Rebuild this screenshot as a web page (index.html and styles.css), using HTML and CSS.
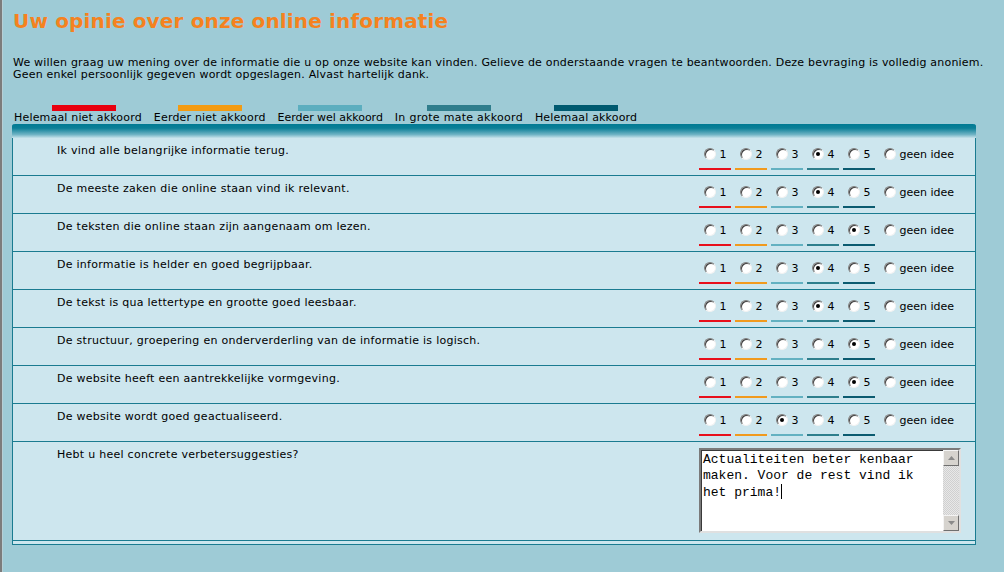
FILE: index.html
```html
<!DOCTYPE html>
<html lang="nl">
<head>
<meta charset="utf-8">
<title>Uw opinie over onze online informatie</title>
<link rel="stylesheet" href="styles.css">
</head>
<body>
<div class="page">
  <h1 class="title">Uw opinie over onze online informatie</h1>
  <p class="intro">We willen graag uw mening over de informatie die u op onze website kan vinden. Gelieve de onderstaande vragen te beantwoorden. Deze bevraging is volledig anoniem.<br>Geen enkel persoonlijk gegeven wordt opgeslagen. Alvast hartelijk dank.</p>

  <div class="legend">
    <div class="leg leg1"><span class="bar c1"></span><span class="lbl">Helemaal niet akkoord</span></div>
    <div class="leg leg2"><span class="bar c2"></span><span class="lbl">Eerder niet akkoord</span></div>
    <div class="leg leg3"><span class="bar c3"></span><span class="lbl">Eerder wel akkoord</span></div>
    <div class="leg leg4"><span class="bar c4"></span><span class="lbl">In grote mate akkoord</span></div>
    <div class="leg leg5"><span class="bar c5"></span><span class="lbl">Helemaal akkoord</span></div>
  </div>

  <div class="survey">
    <div class="survey-head"></div>
    <div class="rows">
      <div class="row">
        <div class="q">Ik vind alle belangrijke informatie terug.</div>
        <div class="opts">
          <span class="opt c1"><span class="radio"></span>1</span>
          <span class="opt c2"><span class="radio"></span>2</span>
          <span class="opt c3"><span class="radio"></span>3</span>
          <span class="opt c4"><span class="radio on"></span>4</span>
          <span class="opt c5"><span class="radio"></span>5</span>
          <span class="opt none"><span class="radio"></span>geen idee</span>
        </div>
      </div>
      <div class="row">
        <div class="q">De meeste zaken die online staan vind ik relevant.</div>
        <div class="opts">
          <span class="opt c1"><span class="radio"></span>1</span>
          <span class="opt c2"><span class="radio"></span>2</span>
          <span class="opt c3"><span class="radio"></span>3</span>
          <span class="opt c4"><span class="radio on"></span>4</span>
          <span class="opt c5"><span class="radio"></span>5</span>
          <span class="opt none"><span class="radio"></span>geen idee</span>
        </div>
      </div>
      <div class="row">
        <div class="q">De teksten die online staan zijn aangenaam om lezen.</div>
        <div class="opts">
          <span class="opt c1"><span class="radio"></span>1</span>
          <span class="opt c2"><span class="radio"></span>2</span>
          <span class="opt c3"><span class="radio"></span>3</span>
          <span class="opt c4"><span class="radio"></span>4</span>
          <span class="opt c5"><span class="radio on"></span>5</span>
          <span class="opt none"><span class="radio"></span>geen idee</span>
        </div>
      </div>
      <div class="row">
        <div class="q">De informatie is helder en goed begrijpbaar.</div>
        <div class="opts">
          <span class="opt c1"><span class="radio"></span>1</span>
          <span class="opt c2"><span class="radio"></span>2</span>
          <span class="opt c3"><span class="radio"></span>3</span>
          <span class="opt c4"><span class="radio on"></span>4</span>
          <span class="opt c5"><span class="radio"></span>5</span>
          <span class="opt none"><span class="radio"></span>geen idee</span>
        </div>
      </div>
      <div class="row">
        <div class="q">De tekst is qua lettertype en grootte goed leesbaar.</div>
        <div class="opts">
          <span class="opt c1"><span class="radio"></span>1</span>
          <span class="opt c2"><span class="radio"></span>2</span>
          <span class="opt c3"><span class="radio"></span>3</span>
          <span class="opt c4"><span class="radio on"></span>4</span>
          <span class="opt c5"><span class="radio"></span>5</span>
          <span class="opt none"><span class="radio"></span>geen idee</span>
        </div>
      </div>
      <div class="row">
        <div class="q">De structuur, groepering en onderverderling van de informatie is logisch.</div>
        <div class="opts">
          <span class="opt c1"><span class="radio"></span>1</span>
          <span class="opt c2"><span class="radio"></span>2</span>
          <span class="opt c3"><span class="radio"></span>3</span>
          <span class="opt c4"><span class="radio"></span>4</span>
          <span class="opt c5"><span class="radio on"></span>5</span>
          <span class="opt none"><span class="radio"></span>geen idee</span>
        </div>
      </div>
      <div class="row">
        <div class="q">De website heeft een aantrekkelijke vormgeving.</div>
        <div class="opts">
          <span class="opt c1"><span class="radio"></span>1</span>
          <span class="opt c2"><span class="radio"></span>2</span>
          <span class="opt c3"><span class="radio"></span>3</span>
          <span class="opt c4"><span class="radio"></span>4</span>
          <span class="opt c5"><span class="radio on"></span>5</span>
          <span class="opt none"><span class="radio"></span>geen idee</span>
        </div>
      </div>
      <div class="row">
        <div class="q">De website wordt goed geactualiseerd.</div>
        <div class="opts">
          <span class="opt c1"><span class="radio"></span>1</span>
          <span class="opt c2"><span class="radio"></span>2</span>
          <span class="opt c3"><span class="radio on"></span>3</span>
          <span class="opt c4"><span class="radio"></span>4</span>
          <span class="opt c5"><span class="radio"></span>5</span>
          <span class="opt none"><span class="radio"></span>geen idee</span>
        </div>
      </div>
      <div class="row row-text">
        <div class="q">Hebt u heel concrete verbetersuggesties?</div>
        <div class="ta">
          <div class="ta-text">Actualiteiten beter kenbaar maken. Voor de rest vind ik het prima!<span class="caret"></span></div>
          <div class="scrollbar">
            <span class="sb-btn"><svg width="7" height="4" viewBox="0 0 7 4"><path d="M3.5 0 L7 4 L0 4 Z" fill="#8a8a8a"/></svg></span>
            <span class="sb-track"></span>
            <span class="sb-btn"><svg width="7" height="4" viewBox="0 0 7 4"><path d="M0 0 L7 0 L3.5 4 Z" fill="#8a8a8a"/></svg></span>
          </div>
        </div>
      </div>
    </div>
  </div>
</div>
</body>
</html>
```

FILE: styles.css
```css
html, body {
  margin: 0;
  padding: 0;
}
body {
  background: #9ecbd6;
  font-family: "DejaVu Sans", Verdana, sans-serif;
  color: #000;
  height: 572px;
  overflow: hidden;
}
.page {
  border-left: 2px solid #7c7c7c;
  box-shadow: inset 1px 0 0 #b7cfd5;
  height: 572px;
  box-sizing: border-box;
  padding: 8px 4px 0 10px;
}
.title {
  margin: 0 0 0 1px;
  font-size: 20px;
  line-height: 26px;
  font-weight: bold;
  letter-spacing: 0.15px;
  color: #f5821f;
}
.intro {
  margin: 23px 0 0 1px;
  font-size: 11px;
  line-height: 12px;
  letter-spacing: 0.2px;
  white-space: nowrap;
}
.legend {
  display: flex;
  gap: 12px;
  margin: 24px 0 0 2px;
}
.leg {
  display: flex;
  flex-direction: column;
  align-items: center;
}
.leg1 .bar {
  margin-left: 12px;
}
.bar {
  width: 64px;
  height: 6px;
  display: block;
  flex: none;
}
.lbl {
  font-size: 11px;
  line-height: 12px;
  margin-top: 1px;
  letter-spacing: 0.18px;
  white-space: nowrap;
}
.leg3 .lbl { letter-spacing: -0.04px; }
.leg4 .lbl { letter-spacing: 0.28px; }
.bar.c1 { background: #e8000f; }
.bar.c2 { background: #f39b12; }
.bar.c3 { background: #5caebf; }
.bar.c4 { background: #2f7d8c; }
.bar.c5 { background: #005a70; }

.survey {
  width: 964px;
  border: 1px solid #1a7b90;
  border-top: none;
  border-radius: 3px 3px 0 0;
  background: #cde6ee;
  padding-bottom: 3px;
  box-sizing: border-box;
}
.survey-head {
  height: 14px;
  border-radius: 3px 3px 0 0;
  background: linear-gradient(#007a93 0%, #0b7f97 30%, #6fb3c4 75%, #c6e2ea 100%);
  margin: 0 -1px;
}
.row {
  height: 37px;
  display: flex;
  justify-content: space-between;
  border-bottom: 1px solid #1a7b90;
}
.q {
  padding: 6px 0 0 44px;
  font-size: 11px;
  line-height: 13px;
  letter-spacing: 0.27px;
}
.opts {
  display: flex;
  gap: 4px;
  padding: 10px 21px 0 0;
  flex: none;
  white-space: nowrap;
}
.opt {
  display: flex;
  align-items: flex-end;
  width: 27px;
  height: 12px;
  padding: 0 0 8px 5px;
  box-sizing: content-box;
  font-size: 11px;
  line-height: 11px;
  border-bottom: 2px solid transparent;
  align-self: flex-start;
}
.opt.c1 { border-bottom-color: #e8101c; }
.opt.c2 { border-bottom-color: #f19a1e; }
.opt.c3 { border-bottom-color: #63b1c1; }
.opt.c4 { border-bottom-color: #2d7e8c; }
.opt.c5 { border-bottom-color: #0b5b70; }
.opt.none {
  width: auto;
  border-bottom: none;
  padding-left: 5px;
}
.radio {
  width: 12px;
  height: 12px;
  box-sizing: border-box;
  border-radius: 50%;
  background: #fff;
  border: 1px solid;
  border-color: #7e7e7e #f2f2f2 #f2f2f2 #7e7e7e;
  box-shadow: inset 1px 1px 0 #404040;
  margin-right: 3px;
  position: relative;
  flex: none;
  align-self: flex-start;
}
.radio.on::after {
  content: "";
  position: absolute;
  left: 3px;
  top: 3px;
  width: 4px;
  height: 4px;
  border-radius: 50%;
  background: #000;
}

.row-text {
  height: 98px;
}
.ta {
  margin: 6px 14px 0 0;
  width: 262px;
  height: 85px;
  box-sizing: border-box;
  background: #fff;
  border: 2px solid;
  border-color: #7a7a7a #e0e0e0 #e0e0e0 #7a7a7a;
  box-shadow: inset 1px 1px 0 #3a3a3a;
  display: flex;
}
.ta-text {
  flex: 1;
  padding: 2px 0 0 2px;
  font-family: "Liberation Mono", "Courier New", monospace;
  font-size: 13px;
  line-height: 16px;
  color: #000;
}
.caret {
  display: inline-block;
  width: 1px;
  height: 15px;
  background: #000;
  vertical-align: -3px;
}
.scrollbar {
  width: 16px;
  display: flex;
  flex-direction: column;
  background-color: #e8e8e8;
  background-image:
    linear-gradient(45deg, #d0d0d0 25%, transparent 25%, transparent 75%, #d0d0d0 75%),
    linear-gradient(45deg, #d0d0d0 25%, transparent 25%, transparent 75%, #d0d0d0 75%);
  background-size: 2px 2px;
  background-position: 0 0, 1px 1px;
}
.sb-btn {
  height: 16px;
  box-sizing: border-box;
  background: #d6d3ce;
  border: 1px solid;
  border-color: #f4f4f4 #6f6f6f #6f6f6f #f4f4f4;
  display: flex;
  align-items: center;
  justify-content: center;
}
.sb-track {
  flex: 1;
}
```
